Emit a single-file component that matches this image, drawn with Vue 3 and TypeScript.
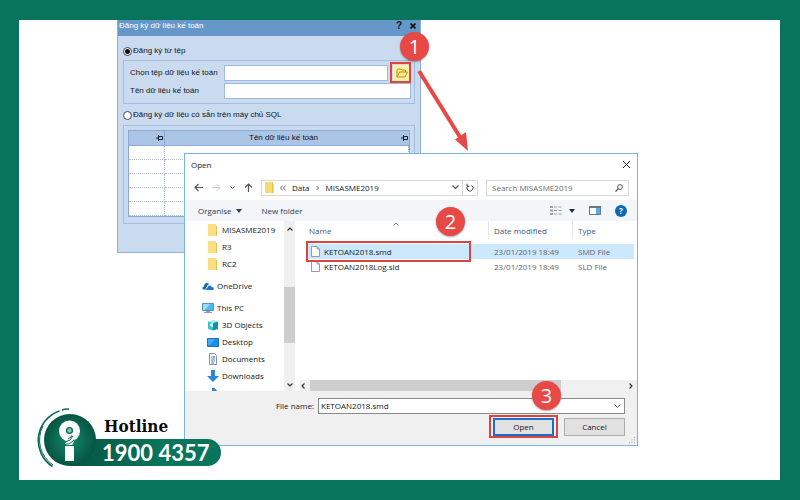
<script setup lang="ts">
import { ref } from 'vue'

interface TreeItem {
  label: string
  icon: 'folder' | 'cloud' | 'pc' | 'cube' | 'desktop' | 'doc' | 'down' | 'music'
  level: 1 | 2
  spaced?: boolean
}

interface FileRow {
  name: string
  modified: string
  type: string
}

const tree: TreeItem[] = [
  { label: 'MISASME2019', icon: 'folder', level: 2 },
  { label: 'R3', icon: 'folder', level: 2 },
  { label: 'RC2', icon: 'folder', level: 2 },
  { label: 'OneDrive', icon: 'cloud', level: 1, spaced: true },
  { label: 'This PC', icon: 'pc', level: 1, spaced: true },
  { label: '3D Objects', icon: 'cube', level: 2 },
  { label: 'Desktop', icon: 'desktop', level: 2 },
  { label: 'Documents', icon: 'doc', level: 2 },
  { label: 'Downloads', icon: 'down', level: 2 },
  { label: 'Music', icon: 'music', level: 2 },
]

const files: FileRow[] = [
  { name: 'KETOAN2018.smd', modified: '23/01/2019 18:49', type: 'SMD File' },
  { name: 'KETOAN2018Log.sld', modified: '23/01/2019 18:49', type: 'SLD File' },
]

const source = ref<'file' | 'sql'>('file')
const dataFile = ref('')
const dataName = ref('')
const search = ref('')
const selected = ref('KETOAN2018.smd')
</script>

<template>
  <main class="stage">
    <section class="register" aria-labelledby="register-title">
      <header class="register-bar">
        <h1 id="register-title">Đăng ký dữ liệu kế toán</h1>
        <button type="button" aria-label="Trợ giúp">?</button>
        <button type="button" aria-label="Đóng">
          <svg width="6" height="6" viewBox="0 0 6 6"><path d="M.5.5l5 5M5.5.5l-5 5" stroke="#111" stroke-width="1.6" /></svg>
        </button>
      </header>
      <div class="register-body">
        <label class="radio"><input v-model="source" type="radio" name="source" value="file" />Đăng ký từ tệp</label>
        <div class="panel fields">
          <label for="data-file">Chọn tệp dữ liệu kế toán</label>
          <div class="pick">
            <input id="data-file" v-model="dataFile" type="text" />
            <button type="button" class="browse" aria-label="Chọn tệp">
              <svg width="12" height="10" viewBox="0 0 12 10">
                <path d="M1 9V2l1-1h3l1 1h3.500v2M1 9l2.500-5H11.500L9 9z" fill="#fbe88a" stroke="#b79422" stroke-width="1" stroke-linejoin="round" />
              </svg>
            </button>
          </div>
          <label for="data-name">Tên dữ liệu kế toán</label>
          <input id="data-name" v-model="dataName" type="text" />
        </div>
        <label class="radio second"><input v-model="source" type="radio" name="source" value="sql" />Đăng ký dữ liệu có sẵn trên máy chủ SQL</label>
        <div class="panel grid-panel">
          <table class="sql-table">
            <thead>
              <tr>
                <th class="pin-col">
                  <svg width="7" height="6" viewBox="0 0 7 6"><path d="M0 3h2M2.500 0v6M2.500 1.500h4v3h-4" fill="none" stroke="#18202c" /></svg>
                </th>
                <th>
                  <span class="th-flex">
                    <span>Tên dữ liệu kế toán</span>
                    <svg width="7" height="6" viewBox="0 0 7 6"><path d="M0 3h2M2.500 0v6M2.500 1.500h4v3h-4" fill="none" stroke="#18202c" /></svg>
                  </span>
                </th>
              </tr>
            </thead>
            <tbody>
              <tr v-for="n in 5" :key="n"><td></td><td></td></tr>
            </tbody>
          </table>
        </div>
      </div>
    </section>

    <section class="dialog" aria-labelledby="dialog-title">
      <header class="dialog-title">
        <h2 id="dialog-title">Open</h2>
        <button type="button" aria-label="Close">
          <svg width="9" height="9" viewBox="0 0 9 9"><path d="M1 1l7 7M8 1L1 8" stroke="#222" /></svg>
        </button>
      </header>

      <nav class="nav">
        <div class="nav-buttons">
          <button type="button" aria-label="Back"><svg width="9" height="9" viewBox="0 0 9 9"><path d="M9 4.500H1M4.500 1L1 4.500 4.500 8" fill="none" stroke="#555" stroke-width="1.200" /></svg></button>
          <button type="button" aria-label="Forward"><svg width="9" height="9" viewBox="0 0 9 9"><path d="M0 4.500h8M4.500 1L8 4.500 4.500 8" fill="none" stroke="#ccc" /></svg></button>
          <button type="button" aria-label="Recent"><svg width="5" height="5" viewBox="0 0 5 5"><path d="M.5 1.500l2 2 2-2" fill="none" stroke="#666" /></svg></button>
          <button type="button" aria-label="Up"><svg width="9" height="9" viewBox="0 0 9 9"><path d="M4.500 9V1M1 4.500L4.500 1 8 4.500" fill="none" stroke="#555" stroke-width="1.200" /></svg></button>
        </div>
        <div class="address">
          <svg width="9" height="11" viewBox="0 0 9 11"><path d="M0 0h8v2h1v9H0z" fill="#f9d975" /><path d="M7 0h1v11H7z" fill="#e9c057" /></svg>
          <svg width="6" height="6" viewBox="0 0 6 6"><path d="M2.500.5L.5 3l2 2.500M5.500.5l-2 2.500 2 2.500" fill="none" stroke="#666" /></svg>
          <a href="#">Data</a>
          <svg width="4" height="6" viewBox="0 0 4 6"><path d="M.5 1L2.500 3 .5 5" fill="none" stroke="#555" /></svg>
          <a href="#" class="current">MISASME2019</a>
          <svg width="7" height="5" viewBox="0 0 7 5"><path d="M.5.5l3 3 3-3" fill="none" stroke="#555" stroke-width="1.200" /></svg>
          <button type="button" class="refresh" aria-label="Refresh">
            <svg width="8" height="9" viewBox="0 0 8 9"><path d="M5.500 2.500A3 3 0 1 1 2 2.800M1 .8v2.400h2.400" fill="none" stroke="#444" /></svg>
          </button>
        </div>
        <div class="search">
          <input v-model="search" type="search" aria-label="Search MISASME2019" placeholder="Search MISASME2019" />
          <svg width="8" height="8" viewBox="0 0 8 8"><circle cx="5" cy="3" r="2.400" fill="none" stroke="#555" /><path d="M3.300 4.700L.5 7.500" stroke="#555" stroke-width="1.200" /></svg>
        </div>
      </nav>

      <div class="toolbar">
        <button type="button">Organise <svg width="6" height="4" viewBox="0 0 6 4"><path d="M0 0h6L3 4z" fill="#2b3c5c" /></svg></button>
        <button type="button" class="new">New folder</button>
        <button type="button" aria-label="View" class="view">
          <svg width="12" height="9" viewBox="0 0 12 9"><path d="M0 1h3M0 4.500h3M0 8h3" stroke="#9a9fa8" stroke-width="2" /><path d="M4 1h3M8.500 1h3M4 4.500h3M8.500 4.500h3M4 8h3M8.500 8h3" stroke="#9a9fa8" /></svg>
          <svg width="6" height="4" viewBox="0 0 6 4"><path d="M0 0h6L3 4z" fill="#1d2c48" /></svg>
        </button>
        <button type="button" aria-label="Preview pane"><svg width="12" height="9" viewBox="0 0 12 9"><path d="M.5.5h11v8H.5z" fill="#fff" stroke="#6b7685" /><path d="M0 0h12v2H0z" fill="#6b7685" /><path d="M7 2h4v6H7z" fill="#5aabee" /></svg></button>
        <button type="button" class="help" aria-label="Help">?</button>
      </div>

      <div class="browser">
        <ul class="tree">
          <li v-for="item in tree" :key="item.label" :class="['level-' + item.level, { spaced: item.spaced }]">
            <svg v-if="item.icon === 'folder'" width="12" height="12" viewBox="0 0 12 12"><path d="M1 0h8v2h1v10H1z" fill="#fbdf82" /><path d="M9 2h1v10H9z" fill="#e8bf55" /></svg>
            <svg v-else-if="item.icon === 'cloud'" width="12" height="12" viewBox="0 0 12 12"><path d="M2 9.500C0 9.500 0 6.500 2 6.400 2 3.500 5 2 7.200 4 6 4.400 5 5.500 4.800 7 3.500 7.300 3.500 8.800 4 9.500z" fill="#1462b0" /><path d="M5 10C3.800 10 3.700 8 5.400 7.800 5.500 5 9 4.500 9.800 7 12.300 7 12.300 10 10.500 10z" fill="#1f77cd" /></svg>
            <svg v-else-if="item.icon === 'pc'" width="12" height="12" viewBox="0 0 12 12"><path d="M.5 1.500h11v7H.5z" fill="#4fb5f3" stroke="#5c8fb5" /><path d="M1 2h7L3 8H1z" fill="#9bdcff" /><path d="M4 9h4v1h2v1H2v-1h2z" fill="#8f9daa" /></svg>
            <svg v-else-if="item.icon === 'cube'" width="12" height="12" viewBox="0 0 12 12"><path d="M1 2.500L6 1l5 1.500L6 4z" fill="#a9ecf3" /><path d="M1 2.500L6 4v7.500L1 10z" fill="#35c4d6" /><path d="M11 2.500L6 4v7.500l5-1.500z" fill="#1093aa" /><path d="M3 5l3-1v4L3 7z" fill="#d9f8fb" /></svg>
            <svg v-else-if="item.icon === 'desktop'" width="12" height="12" viewBox="0 0 12 12"><path d="M.5 2.500h11v8H.5z" fill="#1e8fe8" stroke="#1672bd" /><path d="M1 3h7L3 9H1z" fill="#41aaf5" /></svg>
            <svg v-else-if="item.icon === 'doc'" width="12" height="12" viewBox="0 0 12 12"><path d="M2.500.5h5l2 2v9h-7z" fill="#fafcff" stroke="#8696a8" /><path d="M4 4h1.500M4 6h4M4 8h4M4 10h3" stroke="#4b8ac9" /><path d="M6 3h2v2H6z" fill="#6aa6dc" /></svg>
            <svg v-else-if="item.icon === 'down'" width="12" height="12" viewBox="0 0 12 12"><path d="M4 0h4v6h4L6 12 0 6h4z" fill="#2e86dc" /></svg>
            <svg v-else width="12" height="12" viewBox="0 0 12 12"><path d="M6 1v9M6 1c1 2 4 2 3 5" fill="none" stroke="#2e86dc" stroke-width="2" /></svg>
            <span>{{ item.label }}</span>
          </li>
        </ul>
        <div class="vscroll" aria-hidden="true">
          <svg width="6" height="4" viewBox="0 0 6 4"><path d="M.5 3.500L3 1l2.500 2.500" fill="none" stroke="#333" stroke-width="1.200" /></svg>
          <span class="vthumb"></span>
          <svg width="6" height="4" viewBox="0 0 6 4"><path d="M.5.5L3 3 5.500.5" fill="none" stroke="#333" stroke-width="1.200" /></svg>
        </div>
        <div class="pane">
          <table class="files">
            <thead>
              <tr><th class="name">Name</th><th class="date">Date modified</th><th>Type</th></tr>
            </thead>
            <tbody>
              <tr v-for="f in files" :key="f.name" :class="{ active: f.name === selected }" @click="selected = f.name">
                <td class="name">
                  <span class="file">
                    <svg width="9" height="11" viewBox="0 0 9 11"><path d="M.5.5h5.500l2.500 2.500v7.500h-8z" fill="#fff" stroke="#999" /><path d="M6 .5V3h2.500" fill="none" stroke="#999" /></svg>
                    {{ f.name }}
                  </span>
                </td>
                <td>{{ f.modified }}</td>
                <td>{{ f.type }}</td>
              </tr>
            </tbody>
          </table>
          <div class="hscroll" aria-hidden="true">
            <svg width="4" height="6" viewBox="0 0 4 6"><path d="M3.500.5L1 3l2.500 2.500" fill="none" stroke="#333" stroke-width="1.200" /></svg>
            <span class="htrack"><span class="hthumb"></span></span>
            <svg width="4" height="6" viewBox="0 0 4 6"><path d="M.5.5L3 3 .5 5.500" fill="none" stroke="#333" stroke-width="1.200" /></svg>
          </div>
        </div>
      </div>

      <footer class="dialog-foot">
        <div class="filename">
          <label for="file-name">File name:</label>
          <div class="combo">
            <input id="file-name" v-model="selected" type="text" />
            <svg width="7" height="5" viewBox="0 0 7 5"><path d="M.5.5l3 3 3-3" fill="none" stroke="#555" /></svg>
          </div>
        </div>
        <div class="actions">
          <button type="button" class="primary">Open</button>
          <button type="button">Cancel</button>
        </div>
        <svg class="grip" width="6" height="6" viewBox="0 0 6 6"><path d="M5 0h1v1H5zM5 2.500h1v1H5zM5 5h1v1H5zM2.500 2.500h1v1h-1zM2.500 5h1v1h-1zM0 5h1v1H0z" fill="#aaa" /></svg>
      </footer>
    </section>

    <svg class="arrow" width="60" height="90" viewBox="0 0 60 90">
      <path d="M5 8L46 74" stroke="#e74a46" stroke-width="4" />
      <path d="M54 88L41 76.500 52 69z" fill="#e74a46" />
    </svg>
    <span class="mark mark-browse"></span>
    <span class="mark mark-file"></span>
    <span class="mark mark-open"></span>
    <span class="step step-1">1</span>
    <span class="step step-2">2</span>
    <span class="step step-3">3</span>

    <aside class="hotline">
      <a href="tel:19004357" class="phone">1900 4357</a>
      <svg class="logo" width="62" height="62" viewBox="0 0 62 62">
        <defs>
          <radialGradient id="disc"><stop offset="0" stop-color="#128a6b" /><stop offset="1" stop-color="#075443" /></radialGradient>
        </defs>
        <circle cx="33" cy="34" r="26" fill="url(#disc)" />
        <path d="M22.500 5A31 31 0 0 0 15.500 60.500" fill="none" stroke="#0b6b54" stroke-width="1.600" />
        <path d="M6 20A30 30 0 0 0 16 59" fill="none" stroke="#0b6b54" stroke-width="1" />
        <path d="M25 4Q28.500 2.700 32 3.200" fill="none" stroke="#0b6b54" stroke-width="1.600" />
        <circle cx="32.500" cy="25" r="10.500" fill="#fff" />
        <circle cx="32.500" cy="24.500" r="2.900" fill="#8cc5b5" stroke="#0b6b54" stroke-width="1.400" />
        <path d="M28 37l8-5 1 4-2 3h-7z" fill="#fff" />
        <path d="M28 36q6-1 8-6M28 38.500q7-1 9-5M31 33q4-2 4-4" fill="none" stroke="#0d7058" stroke-width="1" />
        <path d="M28 40h9v15h-9z" fill="#fff" />
      </svg>
      <span class="hot-label">Hotline</span>
    </aside>
  </main>
</template>

<style>
body {
  margin: 0;
  background: #08745b;
}
</style>

<style scoped>
* {
  box-sizing: border-box;
}

svg {
  display: block;
  flex: none;
}

button {
  display: flex;
  align-items: center;
  justify-content: center;
  padding: 0;
  border: 0;
  background: none;
  color: inherit;
  font: inherit;
}

input {
  min-width: 0;
  margin: 0;
  padding: 0 2px;
  border: 0;
  border-radius: 0;
  outline: 0;
  background: #fff;
  color: inherit;
  font: inherit;
}

a {
  color: inherit;
  text-decoration: none;
}

h1,
h2 {
  margin: 0;
  font: inherit;
}

.stage {
  position: relative;
  min-height: 100vh;
  border: solid #08745b;
  border-width: 20px 20px 20px 19px;
  background: #fff;
  overflow: hidden;
}

.register {
  position: absolute;
  top: 0;
  left: 98px;
  width: 304px;
  height: 233px;
  border: solid #8fb0d9;
  border-width: 0 1px 1px;
  background: #cadbf0;
  color: #10131a;
  font: 8px/12px "Liberation Sans", sans-serif;
}

.register-bar {
  display: flex;
  align-items: flex-start;
  gap: 8px;
  height: 16px;
  padding: 0 4px 0 1px;
  background: #6697c9;
}

.register-bar h1 {
  flex: 1;
  color: #fff;
}

.register-bar button {
  height: 11px;
  color: #111;
  font-size: 10px;
  font-weight: bold;
}

.register-body {
  padding: 9px 5px 0;
}

.radio {
  display: flex;
  align-items: center;
  gap: 1px;
  height: 12px;
}

.radio input {
  appearance: none;
  width: 9px;
  height: 9px;
  padding: 0;
  border: 1px solid #444;
  border-radius: 50%;
}

.radio input:checked {
  background: radial-gradient(circle, #111 0 2px, #fff 3px);
}

.panel {
  border: 1px solid #a5bddd;
}

.fields {
  display: grid;
  grid-template-columns: 94px 1fr;
  align-items: center;
  row-gap: 1px;
  height: 44px;
  margin-top: 3px;
  padding: 3px 3px 3px 6px;
}

.fields input {
  width: 100%;
  height: 16px;
  border: 1px solid #9bbbe2;
}

.pick {
  display: flex;
  gap: 5px;
}

.pick input {
  flex: 1;
}

.browse {
  width: 18px;
  height: 16px;
  background: #fdf0a4;
}

.second {
  margin-top: 5px;
}

.grid-panel {
  height: 99px;
  margin-top: 4px;
  padding: 4px 4px 3px;
}

.sql-table {
  width: 100%;
  border: 1px solid #8ba9d2;
  border-spacing: 0;
  background: #fff;
  table-layout: fixed;
}

.sql-table th {
  height: 15px;
  padding: 0 1px;
  border-right: 1px solid #8ba9d2;
  border-bottom: 1px solid #8ba9d2;
  background: #abc5e6;
  font-weight: normal;
}

.sql-table th:last-child {
  border-right: 0;
}

.sql-table .pin-col {
  width: 36px;
}

.pin-col svg {
  margin-left: auto;
}

.th-flex {
  display: flex;
  align-items: center;
}

.th-flex span {
  flex: 1;
}

.sql-table td {
  height: 14px;
  padding: 0;
  border-right: 1px dotted #aebdcf;
  border-bottom: 1px dotted #aebdcf;
}

.dialog {
  position: absolute;
  top: 133px;
  left: 165px;
  display: flex;
  flex-direction: column;
  width: 454px;
  height: 293px;
  border: 1px solid #77b5e8;
  background: #fff;
  color: #16181c;
  font: 8px/12px "Open Sans", sans-serif;
}

.dialog-title {
  display: flex;
  align-items: center;
  justify-content: space-between;
  height: 21px;
  padding: 0 6px;
}

.nav {
  display: flex;
  align-items: center;
  gap: 8px;
  height: 25px;
  padding: 0 8px;
}

.nav-buttons {
  display: flex;
  align-items: center;
  gap: 9px;
  width: 60px;
  padding-left: 1px;
}

.address,
.search {
  display: flex;
  align-items: center;
  height: 16px;
  border: 1px solid #d9d9d9;
}

.address {
  flex: 1;
  gap: 6px;
  padding-left: 3px;
}

.current {
  flex: 1;
}

.refresh {
  width: 15px;
  height: 14px;
  border-left: 1px solid #d9d9d9;
}

.address .refresh {
  margin-left: -3px;
}

.search {
  width: 143px;
  padding-right: 5px;
}

.search input {
  flex: 1;
  height: 12px;
  padding: 0 5px;
  appearance: none;
}

.search input::placeholder {
  color: #6d6d6d;
  opacity: 1;
}

.toolbar {
  display: flex;
  align-items: center;
  height: 21px;
  padding: 0 10px 0 13px;
  background: #f3f5f8;
  color: #2b3c5c;
}

.toolbar button {
  gap: 4px;
}

.toolbar .new {
  margin-left: 20px;
}

.toolbar .view {
  gap: 7px;
  margin: 0 14px 0 auto;
}

.toolbar .help {
  width: 12px;
  height: 12px;
  margin-left: 14px;
  border-radius: 50%;
  background: #0f67b8;
  color: #fff;
  font-weight: bold;
}

.browser {
  display: grid;
  grid-template-columns: 99px 11px 1fr;
  height: 170px;
}

.tree {
  height: 170px;
  margin: 0;
  padding: 0;
  overflow: hidden;
  list-style: none;
}

.tree li {
  display: flex;
  align-items: center;
  gap: 3px;
  height: 17px;
}

.tree .level-1 {
  padding-left: 17px;
}

.tree .level-2 {
  padding-left: 22px;
}

.tree .spaced {
  margin-top: 5px;
}

.vscroll {
  display: flex;
  flex-direction: column;
  align-items: center;
  justify-content: space-between;
  padding: 6px 0 4px;
  background: #f0f0f0;
}

.vthumb {
  width: 11px;
  height: 56px;
  margin-top: 42px;
  margin-bottom: 26px;
  background: #cdcdcd;
}

.pane {
  display: flex;
  flex-direction: column;
  justify-content: space-between;
  padding-left: 5px;
}

.files {
  width: calc(100% - 9px);
  margin-left: 6px;
  border-spacing: 0;
  table-layout: fixed;
}

.files th {
  height: 23px;
  padding: 0 0 3px 6px;
  background: linear-gradient(#e5e5e5, #e5e5e5) left top / 1px 18px no-repeat;
  color: #44597a;
  font-weight: normal;
  text-align: left;
}

.files th.name {
  width: 182px;
  padding-left: 3px;
  background: url("data:image/svg+xml,%3Csvg xmlns='http://www.w3.org/2000/svg' width='6' height='4'%3E%3Cpath d='M.5 3.500L3 1l2.500 2.500' fill='none' stroke='%23777'/%3E%3C/svg%3E") 87px 1px no-repeat;
}

.files th.date {
  width: 84px;
}

.files td {
  height: 15px;
  padding: 0 0 0 6px;
  color: #666;
  white-space: nowrap;
}

.files td.name {
  padding-left: 5px;
  color: #16181c;
}

.files .active td {
  background: #cce8ff;
}

.file {
  display: flex;
  align-items: center;
  gap: 4px;
}

.hscroll {
  display: flex;
  align-items: center;
  gap: 5px;
  height: 11px;
  padding: 0 4px 0 1px;
  background: #f0f0f0;
}

.htrack {
  flex: 1;
  height: 11px;
}

.hthumb {
  display: block;
  width: 80%;
  height: 11px;
  background: #cdcdcd;
}

.dialog-foot {
  position: relative;
  flex: 1;
  padding: 7px 12px 0;
  background: #f0f0f0;
}

.filename {
  display: flex;
  align-items: center;
  justify-content: flex-end;
  gap: 4px;
}

.combo {
  display: flex;
  align-items: center;
  width: 307px;
  height: 16px;
  padding-right: 3px;
  border: 1px solid #8a8a8a;
  background: #fff;
}

.combo input {
  flex: 1;
  height: 12px;
}

.actions {
  display: flex;
  justify-content: flex-end;
  gap: 10px;
  margin-top: 4px;
}

.actions button {
  width: 61px;
  height: 18px;
  border: 1px solid #adadad;
  background: #e1e1e1;
}

.actions .primary {
  border: 2px solid #1c6fc4;
}

.grip {
  position: absolute;
  right: 2px;
  bottom: 2px;
}

.arrow {
  position: absolute;
  top: 43px;
  left: 395px;
}

.mark {
  position: absolute;
  border: 2px solid #dc4440;
  pointer-events: none;
}

.mark-browse {
  top: 42px;
  left: 371px;
  width: 21px;
  height: 21px;
}

.mark-file {
  top: 221px;
  left: 287px;
  width: 165px;
  height: 21px;
}

.mark-open {
  top: 395px;
  left: 470px;
  width: 69px;
  height: 23px;
}

.step {
  position: absolute;
  width: 29px;
  height: 29px;
  border-radius: 50%;
  background: #e74a46;
  box-shadow: 0 1px 2px rgb(0 0 0 / 35%);
  color: #fff;
  font: 20px/29px "Open Sans", sans-serif;
  text-align: center;
}

.step-1 {
  top: 12px;
  left: 381px;
}

.step-2 {
  top: 187px;
  left: 417px;
}

.step-3 {
  top: 361px;
  left: 513px;
}

.hotline {
  position: absolute;
  top: 386px;
  left: 18px;
  width: 184px;
  height: 62px;
}

.phone {
  position: absolute;
  top: 33px;
  right: 0;
  width: 151px;
  height: 27px;
  padding-left: 32px;
  border-radius: 0 14px 14px 0;
  background: linear-gradient(90deg, #075443, #08745b 60%);
  color: #fff;
  font: bold 22px/28px Lato, sans-serif;
  white-space: nowrap;
}

.logo {
  position: absolute;
  top: 0;
  left: 0;
}

.hot-label {
  position: absolute;
  top: 7px;
  left: 67px;
  color: #080808;
  font: bold 17px/26px "DejaVu Serif Condensed", "DejaVu Serif", serif;
}
</style>
